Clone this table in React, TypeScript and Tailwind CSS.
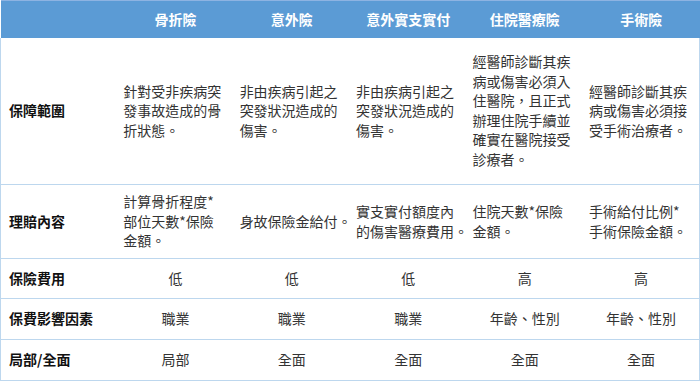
const font = { fontFamily: '"Noto Sans CJK TC", "Noto Sans", sans-serif' };

const headers = ['骨折險', '意外險', '意外實支實付', '住院醫療險', '手術險'];

type Row = { label: string; cells: string[][]; align: 'left' | 'center'; h: string };

const rows: Row[] = [
  {
    label: '保障範圍',
    align: 'left',
    h: 'h-[147px]',
    cells: [
      ['針對受非疾病突', '發事故造成的骨', '折狀態。'],
      ['非由疾病引起之', '突發狀況造成的', '傷害。'],
      ['非由疾病引起之', '突發狀況造成的', '傷害。'],
      ['經醫師診斷其疾', '病或傷害必須入', '住醫院，且正式', '辦理住院手續並', '確實在醫院接受', '診療者。'],
      ['經醫師診斷其疾', '病或傷害必須接', '受手術治療者。'],
    ],
  },
  {
    label: '理賠內容',
    align: 'left',
    h: 'h-[74px]',
    cells: [
      ['計算骨折程度*', '部位天數*保險', '金額。'],
      ['身故保險金給付。'],
      ['實支實付額度內', '的傷害醫療費用。'],
      ['住院天數*保險', '金額。'],
      ['手術給付比例*', '手術保險金額。'],
    ],
  },
  {
    label: '保險費用',
    align: 'center',
    h: 'h-[40px]',
    cells: [['低'], ['低'], ['低'], ['高'], ['高']],
  },
  {
    label: '保費影響因素',
    align: 'center',
    h: 'h-[41px]',
    cells: [['職業'], ['職業'], ['職業'], ['年齡、性別'], ['年齡、性別']],
  },
  {
    label: '局部/全面',
    align: 'center',
    h: 'h-[41px]',
    cells: [['局部'], ['全面'], ['全面'], ['全面'], ['全面']],
  },
];

export default function App() {
  return (
    <div className="w-[700px] h-[382px] bg-white" style={font}>
      <table className="w-[700px] table-fixed border-collapse text-[14px] leading-[19.5px]">
        <thead>
          <tr className="h-[37px] bg-[#5b9bd5] border-t border-t-[#8db3e2]">
            <th className="w-[116.67px]" />
            {headers.map((h) => (
              <th key={h} className="font-bold text-white text-center whitespace-nowrap">
                {h}
              </th>
            ))}
          </tr>
        </thead>
        <tbody>
          {rows.map((row) => (
            <tr key={row.label} className={`${row.h} border-b border-[#bdd7ee]`}>
              <td className="pl-[8px] font-bold text-[#111] whitespace-nowrap border-l border-[#bdd7ee] align-middle">
                {row.label}
              </td>
              {row.cells.map((lines, i) => (
                <td
                  key={i}
                  className={`align-middle text-[#333] whitespace-nowrap ${
                    row.align === 'center' ? 'text-center' : 'text-left pl-[6px]'
                  } ${i === 4 ? 'border-r border-[#bdd7ee]' : ''}`}
                >
                  {lines.map((l, j) => (
                    <div key={j}>{l}</div>
                  ))}
                </td>
              ))}
            </tr>
          ))}
        </tbody>
      </table>
    </div>
  );
}
